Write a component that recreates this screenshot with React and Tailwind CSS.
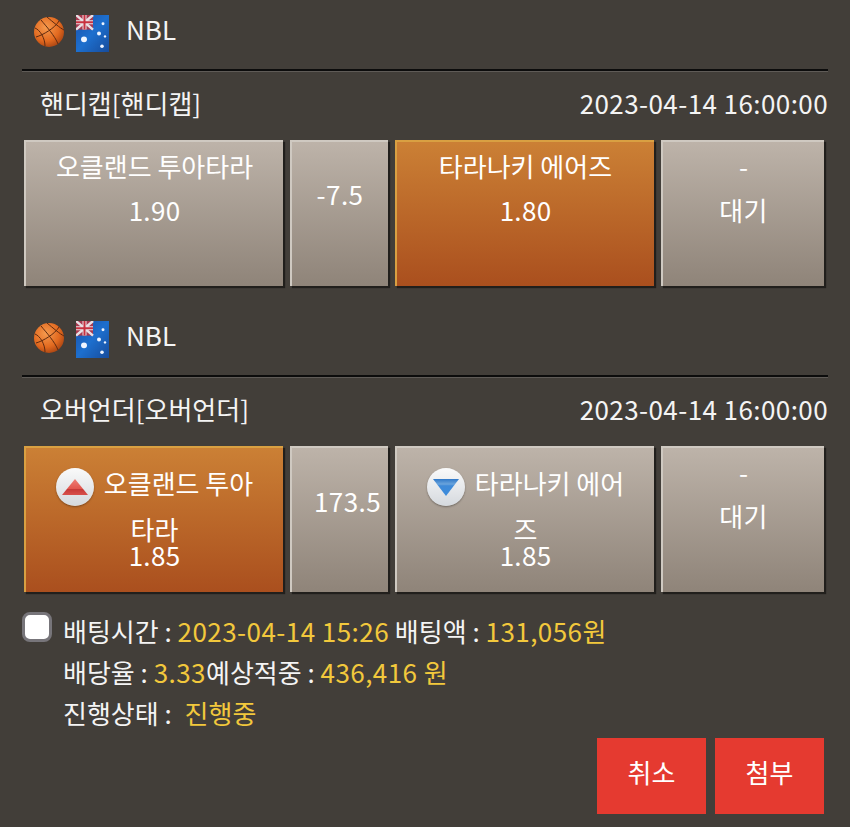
const Ball = () => (
  <svg width="32" height="32" viewBox="0 0 32 32" className="blur-[0.4px]">
    <defs>
      <radialGradient id="ball" cx="0.4" cy="0.35" r="0.75">
        <stop offset="0" stopColor="#f59a4e" />
        <stop offset="0.6" stopColor="#e2691f" />
        <stop offset="1" stopColor="#9c3c10" />
      </radialGradient>
    </defs>
    <circle cx="16" cy="16" r="15" fill="url(#ball)" />
    <g fill="none" stroke="#5e2a10" strokeWidth="1">
      <path d="M3 21C10 19 22 12 26 5" />
      <path d="M8 4C13 10 22 20 25 28" />
      <path d="M14 1C20 6 27 12 31 14" />
      <path d="M2 12C7 14 12 22 12 30" />
    </g>
  </svg>
);

const Flag = () => (
  <svg width="33" height="37" viewBox="0 0 33 38" preserveAspectRatio="none" className="blur-[0.6px]">
    <defs>
      <linearGradient id="flag" x1="0" y1="0" x2="1" y2="1">
        <stop offset="0" stopColor="#1a4fa8" />
        <stop offset="0.5" stopColor="#1d6fce" />
        <stop offset="1" stopColor="#174c9c" />
      </linearGradient>
    </defs>
    <rect width="33" height="38" fill="url(#flag)" />
    <rect width="17" height="15" fill="#a8394f" />
    <path d="M0 0L17 15M17 0L0 15" stroke="#e8dfe4" strokeWidth="2.5" />
    <path d="M8.5 0V15M0 7.5H17" stroke="#e8dfe4" strokeWidth="4" />
    <path d="M8.5 0V15M0 7.5H17" stroke="#c8303f" strokeWidth="2" />
    <g fill="#eef4ff">
      <circle cx="8" cy="25" r="3" />
      <circle cx="27" cy="9" r="1.5" />
      <circle cx="23" cy="19" r="2" />
      <circle cx="29" cy="22" r="1.2" />
      <circle cx="26" cy="32" r="1.8" />
    </g>
  </svg>
);

const Arrow = ({ up }) => (
  <span className="flex shrink-0 w-[38px] h-[38px] mr-[10px] rounded-full items-center justify-center bg-gradient-to-b from-[#fafafa] to-[#d5d9de] shadow-[0_1px_2px_rgba(0,0,0,0.35)]">
    <svg width="28" height="20" viewBox="0 0 28 20" className="blur-[0.4px]">
      <defs>
        <linearGradient id="arrowUp" x1="0" y1="0" x2="0" y2="1">
          <stop offset="0" stopColor="#ee7f76" />
          <stop offset="0.6" stopColor="#e2564e" />
          <stop offset="0.65" stopColor="#c73a38" />
          <stop offset="1" stopColor="#d8504c" />
        </linearGradient>
        <linearGradient id="arrowDown" x1="0" y1="0" x2="0" y2="1">
          <stop offset="0" stopColor="#2f78c8" />
          <stop offset="0.3" stopColor="#6ba4dc" />
          <stop offset="0.4" stopColor="#3f8ad8" />
          <stop offset="1" stopColor="#3c8cdc" />
        </linearGradient>
      </defs>
      {up ? (
        <path d="M14 2L27 18H1Z" fill="url(#arrowUp)" />
      ) : (
        <path d="M1 2H27L14 19Z" fill="url(#arrowDown)" />
      )}
    </svg>
  </span>
);

const League = () => (
  <div className="h-[69px] flex items-center pl-[9px] pb-[6px]">
    <Ball />
    <span className="ml-[11px] mt-[3px]">
      <Flag />
    </span>
    <span className="ml-[17px] text-[26px] leading-none text-[#f4f4f4] -mt-[6px]">NBL</span>
  </div>
);

const Cell = ({ width, active, children }) => (
  <div
    className={`${width} h-full shrink-0 text-center text-white text-[26px] border-t-[2px] border-l-[2px] shadow-[2px_2px_1px_rgba(0,0,0,0.5)] ${
      active
        ? "border-[#d9a042] bg-gradient-to-b from-[#cb8035] to-[#aa4f1e]"
        : "border-[#cfc9c1] bg-gradient-to-b from-[#bdb3a9] to-[#8f8479]"
    }`}
  >
    {children}
  </div>
);

const Match = ({ title, children }) => (
  <div>
    <League />
    <div className="-ml-[2px] -mr-[3px] h-[2px] box-content bg-[#0c0c0c] border-b border-[#5f5b57]" />
    <div className="h-[68px] flex items-center justify-between pl-[16px] pb-[7px] -mr-[3px] text-[26px] text-[#f4f4f4]">
      <span>{title}</span>
      <span className="tracking-[0.42px]">2023-04-14 16:00:00</span>
    </div>
    <div className="flex gap-[7px] h-[146px]">{children}</div>
  </div>
);

const Two = ({ top, bottom }) => (
  <>
    <div className="pt-[5px] leading-[38px]">{top}</div>
    <div className="mt-[6px] leading-[38px] tracking-[0.3px]">{bottom}</div>
  </>
);

const Wrapped = ({ up, first, rest, odds }) => (
  <>
    <div className="flex items-center justify-center pt-[19px] h-[59px] leading-[38px]">
      <Arrow up={up} />
      <span className="-mt-[8px]">{first}</span>
    </div>
    <div className="mt-[9px] leading-[26px]">{rest}</div>
    <div className="leading-[26px] tracking-[0.3px]">{odds}</div>
  </>
);

const Yellow = ({ children }) => (
  <span className="text-[#f2c83c] tracking-[0.45px]">{children}</span>
);

export default function App() {
  return (
    <div className="w-[850px] h-[827px] overflow-hidden bg-[#423e39] pl-[24px] pr-[25px] font-['Noto_Sans_CJK_KR','Noto_Sans',sans-serif]">
      <Match title="핸디캡[핸디캡]">
        <Cell width="w-[259px]">
          <Two top="오클랜드 투아타라" bottom="1.90" />
        </Cell>
        <Cell width="w-[98px]">
          <div className="pt-[33px] leading-[38px] tracking-[0.5px]">-7.5</div>
        </Cell>
        <Cell width="w-[259px]" active>
          <Two top="타라나키 에어즈" bottom="1.80" />
        </Cell>
        <Cell width="w-[163px]">
          <Two top="-" bottom="대기" />
        </Cell>
      </Match>

      <div className="mt-[20px]">
        <Match title="오버언더[오버언더]">
          <Cell width="w-[259px]" active>
            <Wrapped up first="오클랜드 투아" rest="타라" odds="1.85" />
          </Cell>
          <Cell width="w-[98px]">
            <div className="pt-[34px] pl-[15px] leading-[38px] tracking-[0.4px]">173.5</div>
          </Cell>
          <Cell width="w-[259px]">
            <Wrapped first="타라나키 에어" rest="즈" odds="1.85" />
          </Cell>
          <Cell width="w-[163px]">
            <Two top="-" bottom="대기" />
          </Cell>
        </Match>
      </div>

      <div className="flex pt-[18px] -ml-[2px]">
        <div className="w-[30px] h-[30px] mt-[2px] shrink-0 rounded-[8px] bg-white border-[3px] border-[#77757a]" />
        <div className="ml-[11px] text-[26px] leading-[41px] text-[#f4f4f4] whitespace-nowrap">
          <div>
            배팅시간 : <Yellow>2023-04-14 15:26</Yellow> 배팅액 : <Yellow>131,056원</Yellow>
          </div>
          <div>
            배당율 : <Yellow>3.33</Yellow>예상적중 : <Yellow>436,416 원</Yellow>
          </div>
          <div>
            진행상태 : <span className="ml-[7px] text-[#f2c83c]">진행중</span>
          </div>
        </div>
      </div>

      <div className="flex justify-end gap-[9px] mt-[5px] mr-[1px]">
        <button className="w-[109px] h-[76px] pb-[9px] bg-[#e53a30] text-white text-[26px]">취소</button>
        <button className="w-[109px] h-[76px] pb-[9px] bg-[#e53a30] text-white text-[26px]">첨부</button>
      </div>
    </div>
  );
}
